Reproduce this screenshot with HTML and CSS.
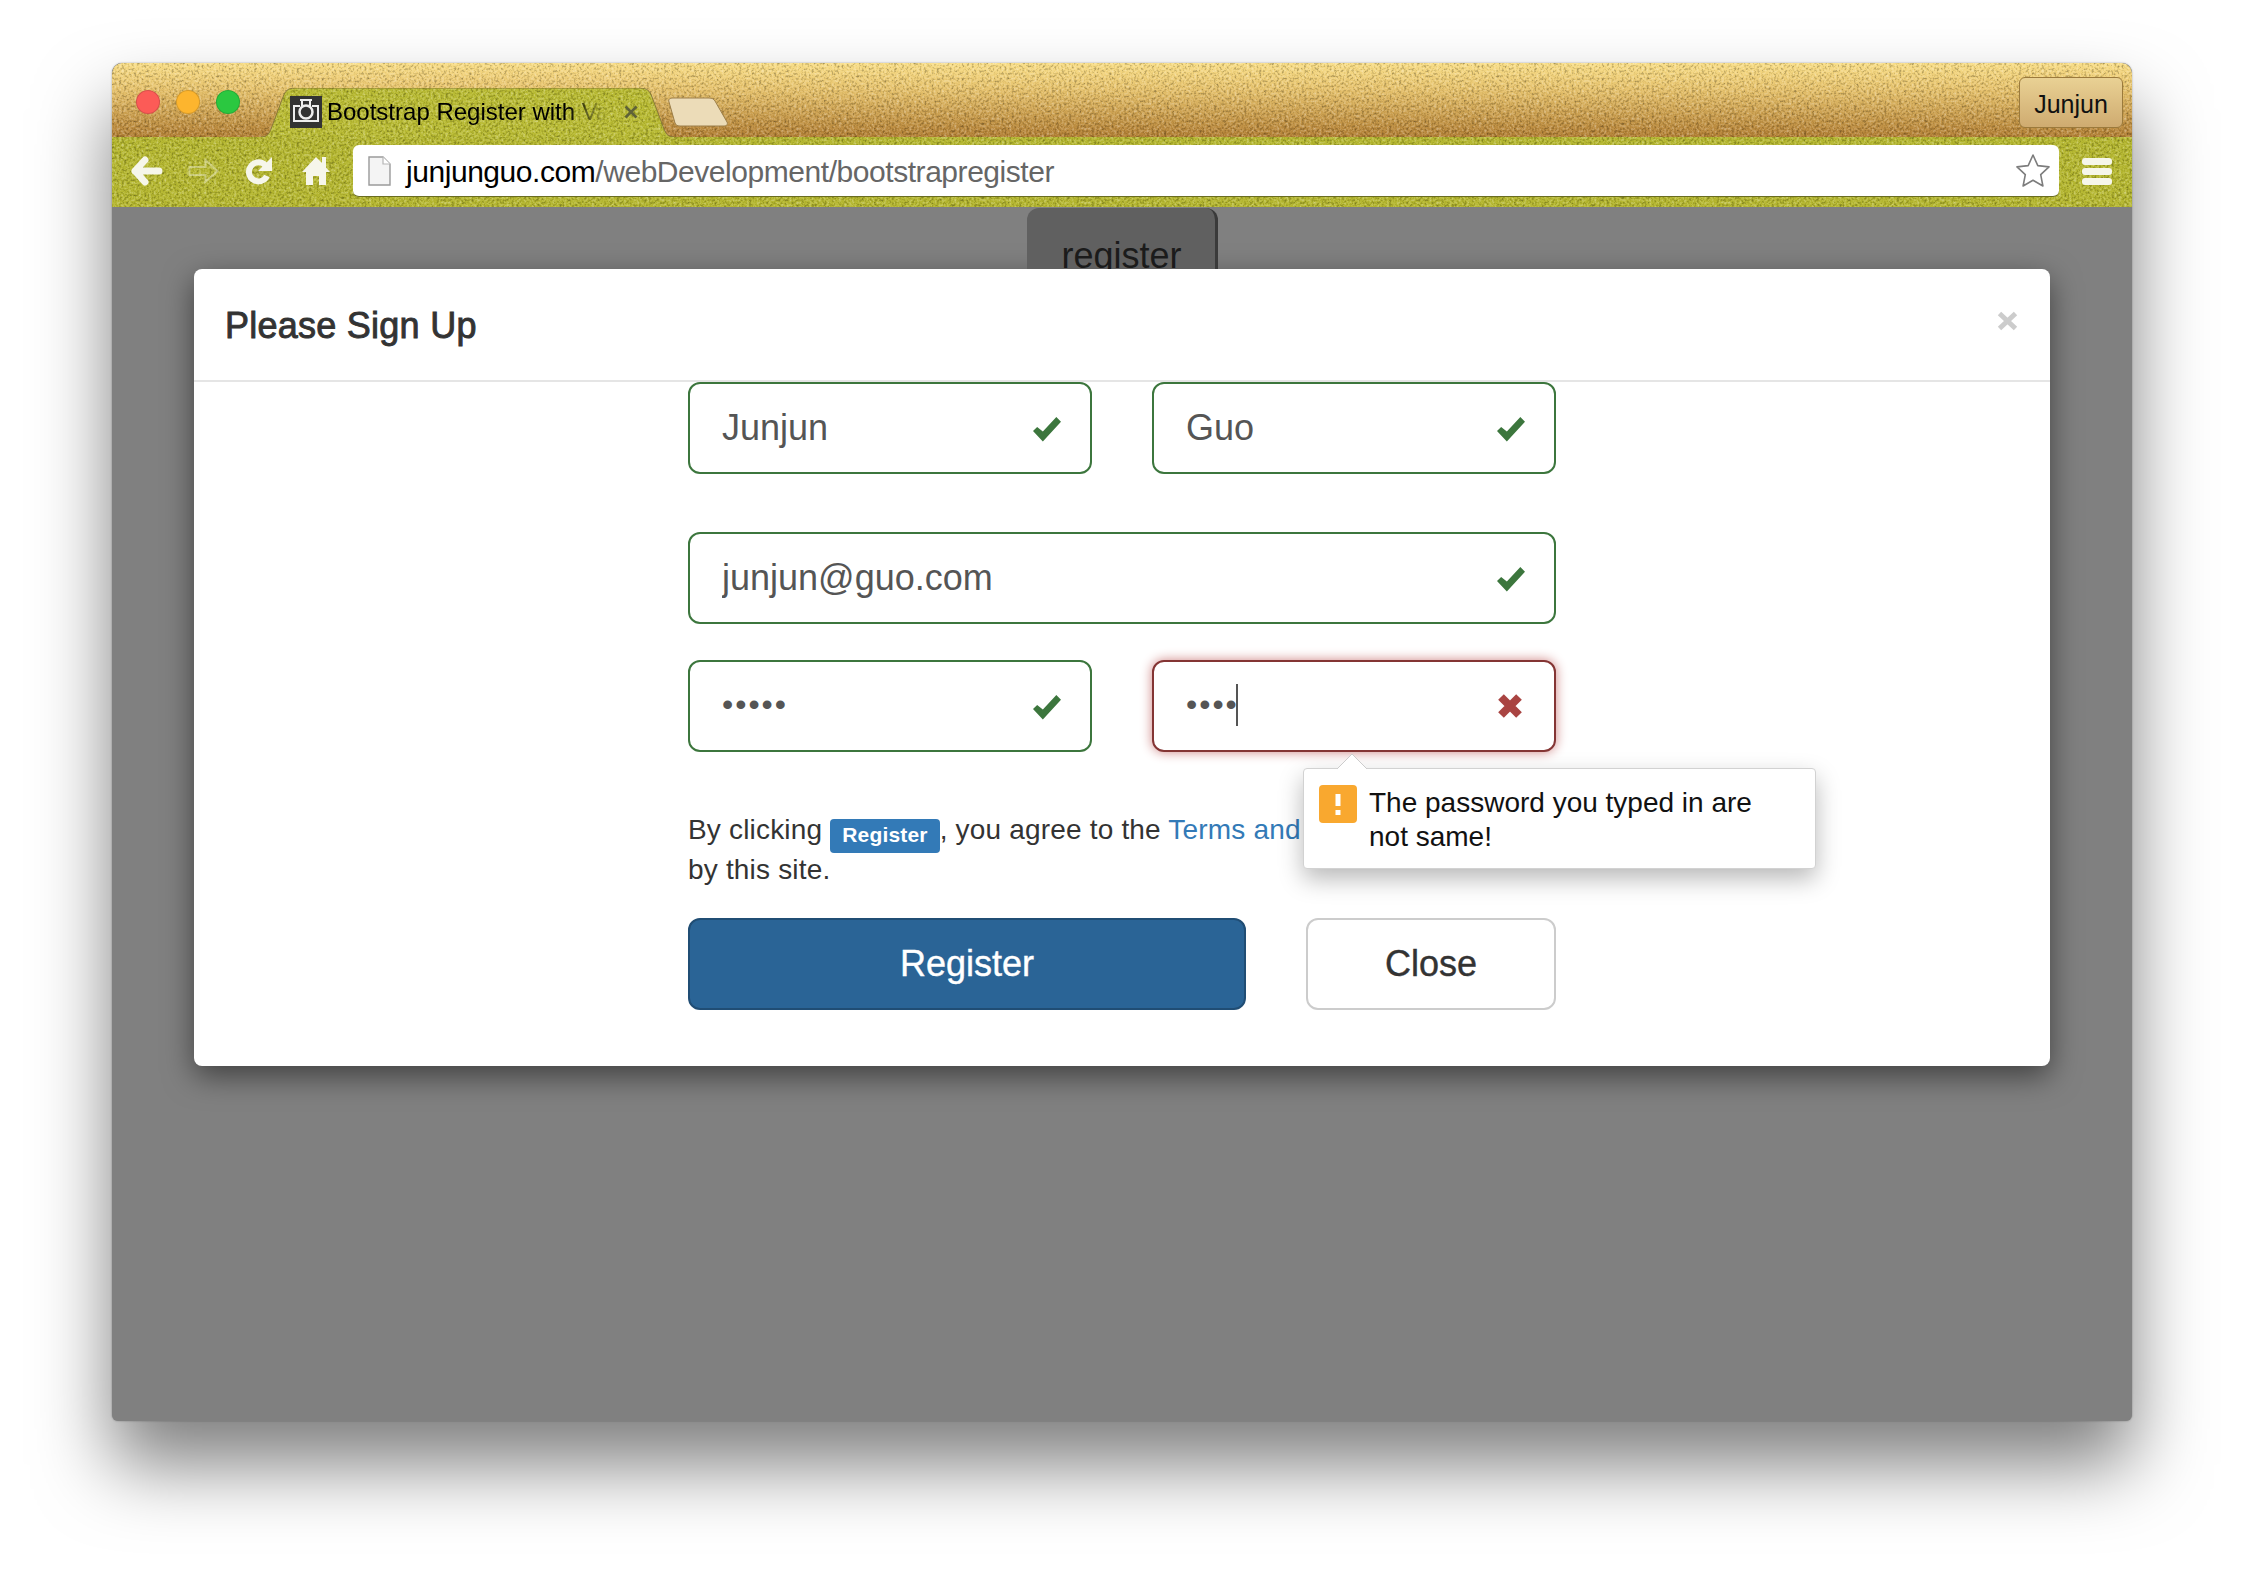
FILE: index.html
```html
<!DOCTYPE html>
<html lang="en">
<head>
  <meta charset="UTF-8">
  <title>Bootstrap Register with Validation</title>
  <link rel="stylesheet" href="styles.css">
</head>
<body>
  <svg class="defs" width="0" height="0">
    <filter id="grain" x="0" y="0" width="100%" height="100%" color-interpolation-filters="sRGB">
      <feTurbulence type="fractalNoise" baseFrequency="0.4" numOctaves="3" seed="4" result="noise"/>
      <feColorMatrix in="noise" type="matrix" values="0.45 0 0 0 0.28  0.45 0 0 0 0.28  0.45 0 0 0 0.28  0 0 0 0 1" result="gray"/>
      <feBlend in="SourceGraphic" in2="gray" mode="overlay" result="mixed"/>
      <feComposite in="mixed" in2="SourceGraphic" operator="in"/>
    </filter>
  </svg>

  <div class="window">
    <div class="tabstrip">
      <div class="grain grain-wood"></div>
      <div class="lights">
        <span class="light red"></span>
        <span class="light yellow"></span>
        <span class="light green"></span>
      </div>
      <div class="tab">
        <svg class="tab-shape" viewBox="0 0 413 49" width="413" height="49">
          <path filter="url(#grain)" d="M0 49 C6 49 8 46 10 41 L22 9 C24 3 27 0 34 0 L379 0 C386 0 389 3 391 9 L403 41 C405 46 407 49 413 49 Z" fill="#b8ba32"/>
          <path d="M0 49 C6 49 8 46 10 41 L22 9 C24 3 27 0 34 0 L379 0 C386 0 389 3 391 9 L403 41 C405 46 407 49 413 49" fill="none" stroke="#8a7a35" stroke-width="1"/>
        </svg>
        <svg class="favicon" viewBox="0 0 32 32" width="32" height="32">
          <rect width="32" height="32" fill="#333"/>
          <path d="M10 4h12M12 4v6M20 4v6M10 10H4v15h24V10h-6" fill="none" stroke="#eee" stroke-width="2"/>
          <circle cx="16" cy="16" r="6.5" fill="none" stroke="#eee" stroke-width="2.5"/>
        </svg>
        <span class="tab-title">Bootstrap Register with Validation</span>
        <svg class="tab-close" viewBox="0 0 14 14" width="14" height="14">
          <path d="M1.5 1.5l11 11M12.5 1.5l-11 11" stroke="#5f6238" stroke-width="2.6"/>
        </svg>
      </div>
      <svg class="newtab" viewBox="0 0 62 30" width="62" height="30">
        <path d="M6 1h36c3 0 5 1 6 3l12 21c1 2 0 4-3 4H13c-3 0-4-1-5-3L2 5C1 2 3 1 6 1z" fill="#ecdcb8" stroke="#9c7f4a" stroke-width="1"/>
      </svg>
      <div class="profile">Junjun</div>
    </div>

    <div class="toolbar">
      <div class="grain grain-green"></div>
      <svg class="tool back" viewBox="0 0 32 30" width="32" height="30">
        <path d="M4 15h24M14 4L4 15l10 11" fill="none" stroke="#f6f6ea" stroke-width="7" stroke-linecap="round" stroke-linejoin="round"/>
      </svg>
      <svg class="tool forward" viewBox="0 0 32 30" width="33" height="30">
        <path d="M2 11h16V4l12 11-12 11v-7H2z" fill="none" stroke="#f6f6ea" stroke-opacity=".4" stroke-width="2"/>
      </svg>
      <svg class="tool reload" viewBox="0 0 28 30" width="28" height="30">
        <path d="M20.5 9.5A9.5 9.5 0 1 0 22 20" fill="none" stroke="#f6f6ea" stroke-width="6"/>
        <path d="M27 1v14H13z" fill="#f6f6ea"/>
      </svg>
      <svg class="tool home" viewBox="0 0 28 30" width="28" height="30">
        <path d="M14 1L0 16h4v13h7v-9h6v9h7V16h4l-4-4.5V1h-4v6z" fill="#f6f6ea"/>
      </svg>
      <div class="omnibox">
        <svg class="page-icon" viewBox="0 0 23 30" width="23" height="30">
          <path d="M1 1h14l7 7v21H1z" fill="#f4f4f4" stroke="#9a9a9a" stroke-width="1.4"/>
          <path d="M15 1v7h7" fill="#fff" stroke="#b5b5b5" stroke-width="1.2"/>
        </svg>
        <span class="url"><b>junjunguo.com</b>/webDevelopment/bootstrapregister</span>
        <svg class="star" viewBox="0 0 36 35" width="36" height="35">
          <path d="M18 2l4.8 10.6 11.2 1.3-8.3 7.7 2.2 11.4L18 27.3 8.1 33l2.2-11.4L2 13.9l11.2-1.3z" fill="#fff" stroke="#7d7d7d" stroke-width="1.6" stroke-linejoin="round"/>
        </svg>
      </div>
      <div class="menu">
        <span></span><span></span><span></span>
      </div>
    </div>

    <div class="content">
      <div class="page-top">
        <button class="page-btn" type="button">register</button>
      </div>

      <div class="modal">
        <div class="modal-header">
          <h4>Please Sign Up</h4>
          <svg class="modal-close" viewBox="0 0 21 20" width="21" height="20">
            <path d="M2.5 2.5l16 15M18.500 2.5l-16 15" stroke="#ccc" stroke-width="5"/>
          </svg>
        </div>
        <div class="modal-body">
          <form class="signup">
            <div class="row">
              <div class="field">
                <input type="text" value="Junjun" readonly>
                <svg class="state" viewBox="0 0 27 24" width="28" height="25"><polygon points="0,13.5 4,9.5 9.5,14 22.5,0 27,4.5 9.5,23.5" fill="#3c763d"/></svg>
              </div>
              <div class="field">
                <input type="text" value="Guo" readonly>
                <svg class="state" viewBox="0 0 27 24" width="28" height="25"><polygon points="0,13.5 4,9.5 9.5,14 22.5,0 27,4.5 9.5,23.5" fill="#3c763d"/></svg>
              </div>
            </div>
            <div class="field field-email">
              <input type="text" value="junjun@guo.com" readonly>
              <svg class="state" viewBox="0 0 27 24" width="28" height="25"><polygon points="0,13.5 4,9.5 9.5,14 22.5,0 27,4.5 9.5,23.5" fill="#3c763d"/></svg>
            </div>
            <div class="row row-pass">
              <div class="field">
                <input type="password" value="abcde" readonly>
                <svg class="state" viewBox="0 0 27 24" width="28" height="25"><polygon points="0,13.5 4,9.5 9.5,14 22.5,0 27,4.5 9.5,23.5" fill="#3c763d"/></svg>
              </div>
              <div class="field field-error">
                <input type="password" value="abcd" readonly>
                <span class="caret"></span>
                <svg class="state state-x" viewBox="0 0 24 24" width="24" height="24"><path d="M3 3l18 18M21 3L3 21" stroke="#a94442" stroke-width="8"/></svg>
                <div class="popover">
                  <svg class="popover-arrow" viewBox="0 0 32 17" width="32" height="17">
                    <path d="M1 16L16 1l15 15" fill="#fff" stroke="#ccc" stroke-width="1"/>
                  </svg>
                  <svg class="warn" viewBox="0 0 38 38" width="38" height="38">
                    <rect width="38" height="38" rx="4" fill="#f9a82f"/>
                    <rect x="16.500" y="9" width="5" height="12" fill="#fff"/>
                    <rect x="16.500" y="25" width="5" height="5" fill="#fff"/>
                  </svg>
                  <p>The password you typed in are not same!</p>
                </div>
              </div>
            </div>
            <p class="terms">By clicking <span class="label">Register</span>, you agree to the <a href="#">Terms and Conditions</a> set out by this site.</p>
            <div class="row row-buttons">
              <button class="btn btn-primary" type="button">Register</button>
              <button class="btn btn-default" type="button">Close</button>
            </div>
          </form>
        </div>
      </div>
    </div>
  </div>
</body>
</html>
```

FILE: styles.css
```css
body {
  margin: 0;
  padding: 63px 0 0 112px;
  height: 1580px;
  box-sizing: border-box;
  overflow: hidden;
  background: #fff;
  font-family: "Liberation Sans", Arial, sans-serif;
}
.defs {
  position: absolute;
}
.window {
  width: 2020px;
  height: 1358px;
  display: flex;
  flex-direction: column;
  border-radius: 10px 10px 6px 6px;
  box-shadow: 0 44px 74px rgba(0, 0, 0, .5), 0 0 2px rgba(0, 0, 0, .35);
  background: #808080;
}

/* tab strip */
.tabstrip {
  position: relative;
  height: 74px;
  display: flex;
  align-items: flex-end;
  flex: none;
}
.grain {
  position: absolute;
  top: 0;
  left: 0;
  right: 0;
  bottom: 0;
  filter: url(#grain);
}
.grain-wood {
  border-radius: 10px 10px 0 0;
  background: linear-gradient(#f8dd86, #e6c26c 35%, #b27f34);
}
.grain-green {
  background: #b4b62f;
}
.lights {
  position: relative;
  display: flex;
  gap: 16px;
  margin: 0 0 23px 24px;
}
.light {
  width: 24px;
  height: 24px;
  border-radius: 50%;
  box-sizing: border-box;
  border: 1px solid rgba(0, 0, 0, .14);
}
.red { background: #fc5b57; }
.yellow { background: #fdb52e; }
.green { background: #2bc840; }
.tab {
  position: relative;
  width: 413px;
  height: 49px;
  margin-left: 21px;
  display: flex;
  align-items: flex-start;
}
.tab-shape {
  position: absolute;
  left: 0;
  top: 0;
}
.favicon {
  position: relative;
  margin: 8px 0 0 29px;
}
.tab-title {
  position: relative;
  width: 280px;
  margin: 10px 0 0 5px;
  font-size: 24px;
  line-height: 28px;
  white-space: nowrap;
  overflow: hidden;
  color: #000;
  -webkit-mask-image: linear-gradient(to right, #000 240px, transparent 280px);
  mask-image: linear-gradient(to right, #000 240px, transparent 280px);
}
.tab-close {
  position: relative;
  margin: 17px 0 0 17px;
}
.newtab {
  position: relative;
  margin: 0 0 10px -7px;
}
.profile {
  position: relative;
  width: 104px;
  height: 51px;
  margin: 0 9px 9px auto;
  box-sizing: border-box;
  border: 1px solid #9b7a3c;
  border-radius: 6px;
  background: linear-gradient(#e9d194, #cfab70);
  font-size: 25px;
  line-height: 52px;
  text-align: center;
  color: #111;
}

/* toolbar */
.toolbar {
  position: relative;
  height: 70px;
  display: flex;
  align-items: center;
  flex: none;
  padding-left: 19px;
}
.tool {
  position: relative;
  margin-top: -2px;
}
.forward { margin-left: 24px; }
.reload { margin-left: 25px; }
.home { margin-left: 29px; }
.omnibox {
  position: relative;
  width: 1706px;
  height: 52px;
  margin: -2px 0 0 23px;
  box-sizing: border-box;
  padding: 0 8px 0 15px;
  display: flex;
  align-items: center;
  background: #fff;
  border-radius: 6px;
  border-bottom: 1px solid #6a6d20;
}
.page-icon {
  flex: none;
}
.url {
  margin: 2px 0 0 15px;
  font-size: 30px;
  letter-spacing: -.45px;
  color: #666;
  white-space: nowrap;
}
.url b {
  font-weight: normal;
  color: #000;
}
.star {
  margin-left: auto;
}
.menu {
  position: relative;
  width: 30px;
  margin: -2px 0 0 23px;
  display: flex;
  flex-direction: column;
  gap: 3px;
}
.menu span {
  height: 7px;
  border-radius: 3px;
  background: #f6f6ea;
}

/* page behind the modal */
.content {
  flex: 1;
  padding: 0 82px;
}
.page-top {
  height: 62px;
  overflow: hidden;
  display: flex;
  justify-content: center;
}
.page-btn {
  width: 191px;
  height: 92px;
  margin-top: 1px;
  padding: 4px 0 0 2px;
  box-sizing: border-box;
  background: #606060;
  border: 0;
  border-right: 3px solid #3a3a3a;
  border-radius: 12px;
  font-family: inherit;
  font-size: 36px;
  color: #1b1b1b;
}

/* modal */
.modal {
  background: #fff;
  border-radius: 8px;
  box-shadow: 0 10px 30px rgba(0, 0, 0, .5);
}
.modal-header {
  height: 113px;
  box-sizing: border-box;
  padding: 3px 32px 0 31px;
  display: flex;
  align-items: center;
  justify-content: space-between;
  border-bottom: 2px solid #e5e5e5;
}
.modal-header h4 {
  margin: 0;
  font-size: 36px;
  font-weight: 400;
  letter-spacing: .25px;
  color: #333;
  -webkit-text-stroke: .9px #333;
}
.modal-close {
  margin-top: -10px;
}
.modal-body {
  padding: 0 0 56px 494px;
}
.signup {
  width: 868px;
}
.row {
  display: flex;
  justify-content: space-between;
}
.field {
  position: relative;
  width: 404px;
  height: 92px;
}
.field input {
  width: 100%;
  height: 100%;
  box-sizing: border-box;
  margin: 0;
  padding: 0 32px;
  font-family: inherit;
  font-size: 36px;
  color: #555;
  background: #fff;
  border: 2px solid #3c763d;
  border-radius: 12px;
  outline: none;
}
.field input[type=password] {
  font-size: 32px;
  letter-spacing: 2px;
  padding-bottom: 3px;
}
.field-email {
  width: 868px;
  margin-top: 58px;
}
.row-pass {
  margin-top: 36px;
}
.field-error input {
  border-color: #843534;
  box-shadow: 0 0 12px #ce8483;
}
.state {
  position: absolute;
  right: 31px;
  top: 35px;
}
.state-x {
  top: 34px;
  right: 34px;
}
.caret {
  position: absolute;
  left: 84px;
  top: 24px;
  width: 2px;
  height: 42px;
  background: #555;
}
.popover {
  position: absolute;
  left: 151px;
  top: 108px;
  width: 513px;
  height: 101px;
  box-sizing: border-box;
  padding: 16px 58px 0 15px;
  display: flex;
  align-items: flex-start;
  gap: 12px;
  background: #fff;
  border: 1px solid #d2d2d2;
  border-radius: 4px;
  box-shadow: 0 10px 24px rgba(0, 0, 0, .28);
  z-index: 2;
}
.popover-arrow {
  position: absolute;
  left: 32px;
  top: -16px;
}
.warn {
  flex: none;
}
.popover p {
  margin: 1px 0 0;
  font-size: 28px;
  line-height: 34px;
  color: #111;
}
.terms {
  margin: 58px 0 0;
  font-size: 28px;
  line-height: 40px;
  letter-spacing: .18px;
  color: #333;
}
.terms a {
  color: #337ab7;
  text-decoration: none;
}
.label {
  display: inline-block;
  height: 34px;
  margin: -3px 0;
  padding: 0 12px;
  vertical-align: -3px;
  background: #337ab7;
  border-radius: 4px;
  font-size: 21px;
  font-weight: bold;
  line-height: 31px;
  color: #fff;
}
.row-buttons {
  margin-top: 28px;
}
.btn {
  height: 92px;
  box-sizing: border-box;
  border-radius: 12px;
  font-family: inherit;
  font-size: 36px;
  padding: 0;
  -webkit-text-stroke: .4px;
}
.btn-primary {
  width: 558px;
  background: #2a6496;
  border: 2px solid #204d74;
  color: #fff;
}
.btn-default {
  width: 250px;
  background: #fff;
  border: 2px solid #ccc;
  color: #333;
}
```
